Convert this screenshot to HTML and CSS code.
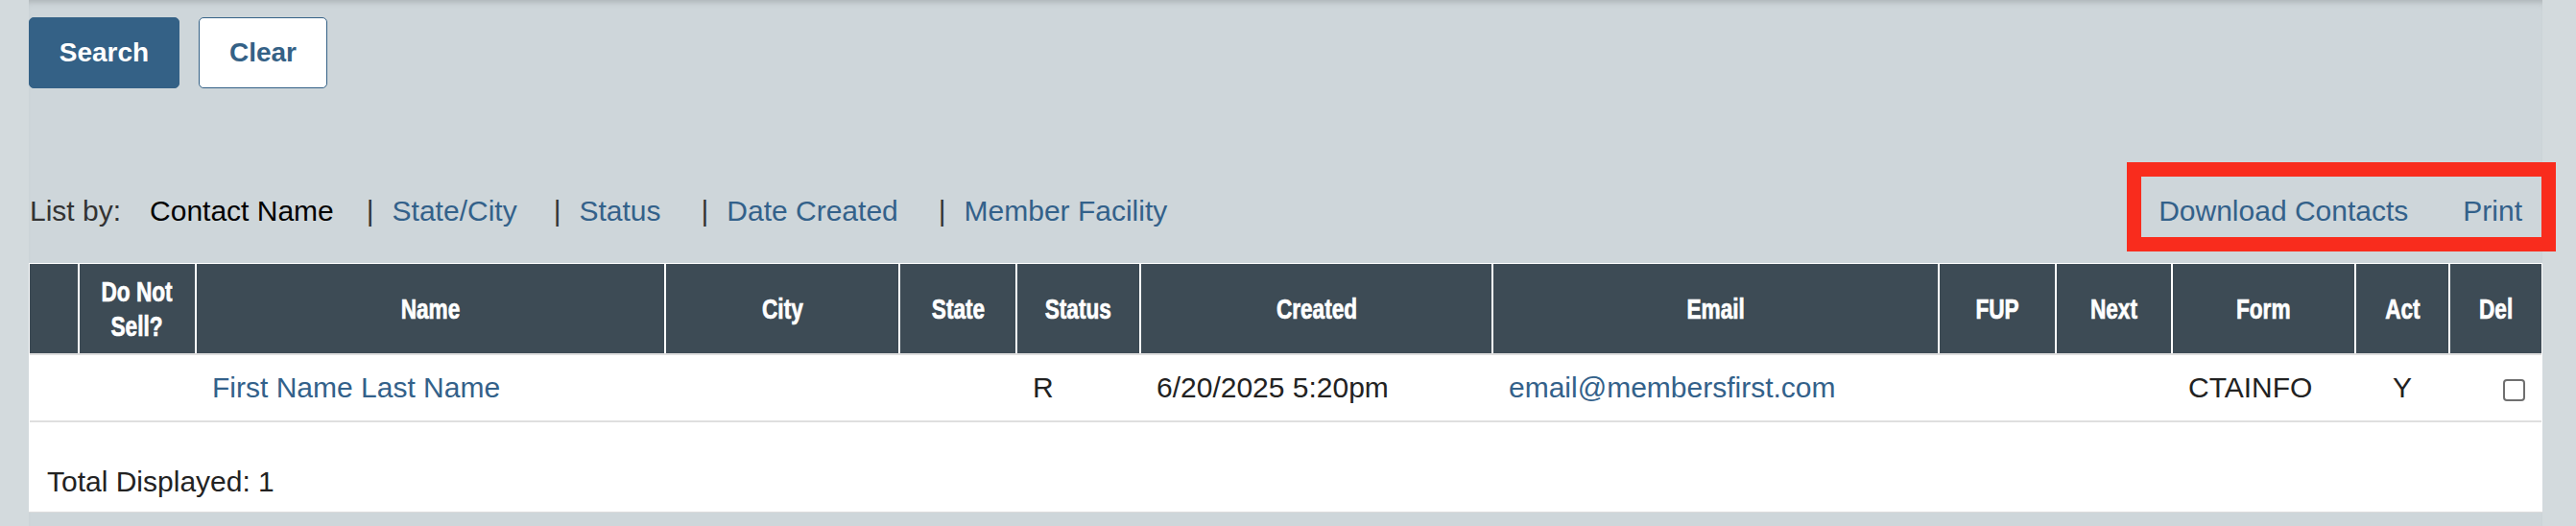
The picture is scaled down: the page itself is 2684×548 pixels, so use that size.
FILE: index.html
```html
<!DOCTYPE html>
<html lang="en">
<head>
<meta charset="utf-8">
<title>Contacts</title>
<link rel="stylesheet" href="styles.css">
</head>
<body>
<div class="page">
  <div class="actions">
    <button class="btn btn-primary">Search</button>
    <button class="btn btn-outline">Clear</button>
  </div>

  <div class="listbar">
    <div class="listby">
      <span class="label">List by:</span>
      <span class="current">Contact Name</span>
      <span class="sep">|</span>
      <a class="link" href="#">State/City</a>
      <span class="sep sep-two">|</span>
      <a class="link" href="#">Status</a>
      <span class="sep sep-mid">|</span>
      <a class="link" href="#">Date Created</a>
      <span class="sep sep-wide">|</span>
      <a class="link" href="#">Member Facility</a>
    </div>
    <div class="tools">
      <a class="link" href="#">Download Contacts</a>
      <a class="link" href="#">Print</a>
      <div class="highlight"></div>
    </div>
  </div>

  <div class="panel">
    <table class="grid">
      <colgroup>
        <col style="width:51px">
        <col style="width:122px">
        <col style="width:489px">
        <col style="width:244px">
        <col style="width:122px">
        <col style="width:129px">
        <col style="width:367px">
        <col style="width:465px">
        <col style="width:122px">
        <col style="width:121px">
        <col style="width:191px">
        <col style="width:98px">
        <col style="width:96px">
      </colgroup>
      <thead>
        <tr>
          <th></th>
          <th><span class="h">Do Not<br>Sell?</span></th>
          <th><span class="h">Name</span></th>
          <th><span class="h">City</span></th>
          <th><span class="h">State</span></th>
          <th><span class="h">Status</span></th>
          <th><span class="h">Created</span></th>
          <th><span class="h">Email</span></th>
          <th><span class="h">FUP</span></th>
          <th><span class="h">Next</span></th>
          <th><span class="h">Form</span></th>
          <th><span class="h">Act</span></th>
          <th><span class="h">Del</span></th>
        </tr>
      </thead>
      <tbody>
        <tr>
          <td></td>
          <td></td>
          <td><a class="link" href="#">First Name Last Name</a></td>
          <td></td>
          <td></td>
          <td>R</td>
          <td>6/20/2025 5:20pm</td>
          <td><a class="link" href="#">email@membersfirst.com</a></td>
          <td></td>
          <td></td>
          <td>CTAINFO</td>
          <td class="center">Y</td>
          <td class="right"><input type="checkbox" class="check"></td>
        </tr>
      </tbody>
    </table>
    <div class="total">Total Displayed: 1</div>
  </div>
</div>
</body>
</html>
```

FILE: styles.css
```css
html, body {
  margin: 0;
  padding: 0;
}

body {
  background: #d3dadd;
  font-family: "Liberation Sans", Arial, sans-serif;
  font-size: 30px;
  color: #222;
  width: 2684px;
  height: 548px;
  overflow: hidden;
}

.page {
  margin-left: 30px;
  width: 2619px;
  min-height: 548px;
  background: #ced6da;
  padding-top: 18px;
  box-sizing: border-box;
  box-shadow: inset 0 7px 7px -5px rgba(0, 0, 0, 0.18);
}

.actions {
  display: flex;
  gap: 20px;
}

.btn {
  height: 74px;
  border-radius: 5px;
  font-family: "Liberation Sans", Arial, sans-serif;
  font-weight: bold;
  font-size: 28px;
  cursor: pointer;
  box-sizing: border-box;
}

.btn-primary {
  width: 157px;
  background: #346186;
  color: #fff;
  border: 1px solid #346186;
}

.btn-outline {
  width: 134px;
  background: #fff;
  color: #346186;
  border: 1.5px solid #346186;
}

.listbar {
  display: flex;
  justify-content: space-between;
  align-items: baseline;
  margin-top: 108px;
  line-height: 40px;
}

.listby {
  display: flex;
  align-items: baseline;
  padding-left: 1px;
}

.label {
  color: #333;
  margin-right: 30px;
}

.current {
  color: #000;
}

.sep {
  color: #333;
  margin: 0 19px 0 34px;
}

.sep-two {
  margin-left: 38px;
}

.sep-mid {
  margin-left: 42px;
}

.sep-wide {
  margin-left: 42px;
}

.link {
  color: #33618a;
  text-decoration: none;
}

.tools {
  position: relative;
  display: flex;
  gap: 57px;
  padding-right: 21px;
}

.highlight {
  position: absolute;
  left: -33px;
  right: -14px;
  top: -31px;
  bottom: -22px;
  border: 15px solid #f92c1d;
  pointer-events: none;
}

.panel {
  margin-top: 34px;
  background: #fff;
  padding: 1px 1px 0 1px;
  border-bottom: 1px solid #dcdcdc;
}

.grid {
  width: 100%;
  table-layout: fixed;
  border-collapse: collapse;
}

.grid th {
  background: #3d4b55;
  color: #fff;
  font-family: "Liberation Sans", Arial, sans-serif;
  font-weight: bold;
  font-size: 29px;
  line-height: 36px;
  height: 93px;
  padding: 0;
  text-align: center;
  vertical-align: middle;
  border-left: 2px solid #fff;
  border-bottom: 2px solid #dfdfdf;
  white-space: nowrap;
}

.grid th:first-child {
  border-left: none;
}

.h {
  display: inline-block;
  transform: scaleX(0.78);
  transform-origin: center;
  -webkit-text-stroke: 0.7px #fff;
}

.grid td {
  height: 68px;
  padding: 0 17px;
  border-bottom: 2px solid #dfdfdf;
  color: #222;
  white-space: nowrap;
  vertical-align: middle;
}

.grid td.center {
  text-align: center;
}

.grid td.right {
  text-align: right;
  padding-right: 17px;
}

.check {
  appearance: none;
  -webkit-appearance: none;
  width: 23px;
  height: 23px;
  margin: 0;
  border: 2px solid #6f6f6f;
  border-radius: 4px;
  background: #fff;
  vertical-align: middle;
}

.total {
  height: 93px;
  box-sizing: border-box;
  padding: 42px 0 0 18px;
  line-height: 40px;
  color: #222;
}
```
